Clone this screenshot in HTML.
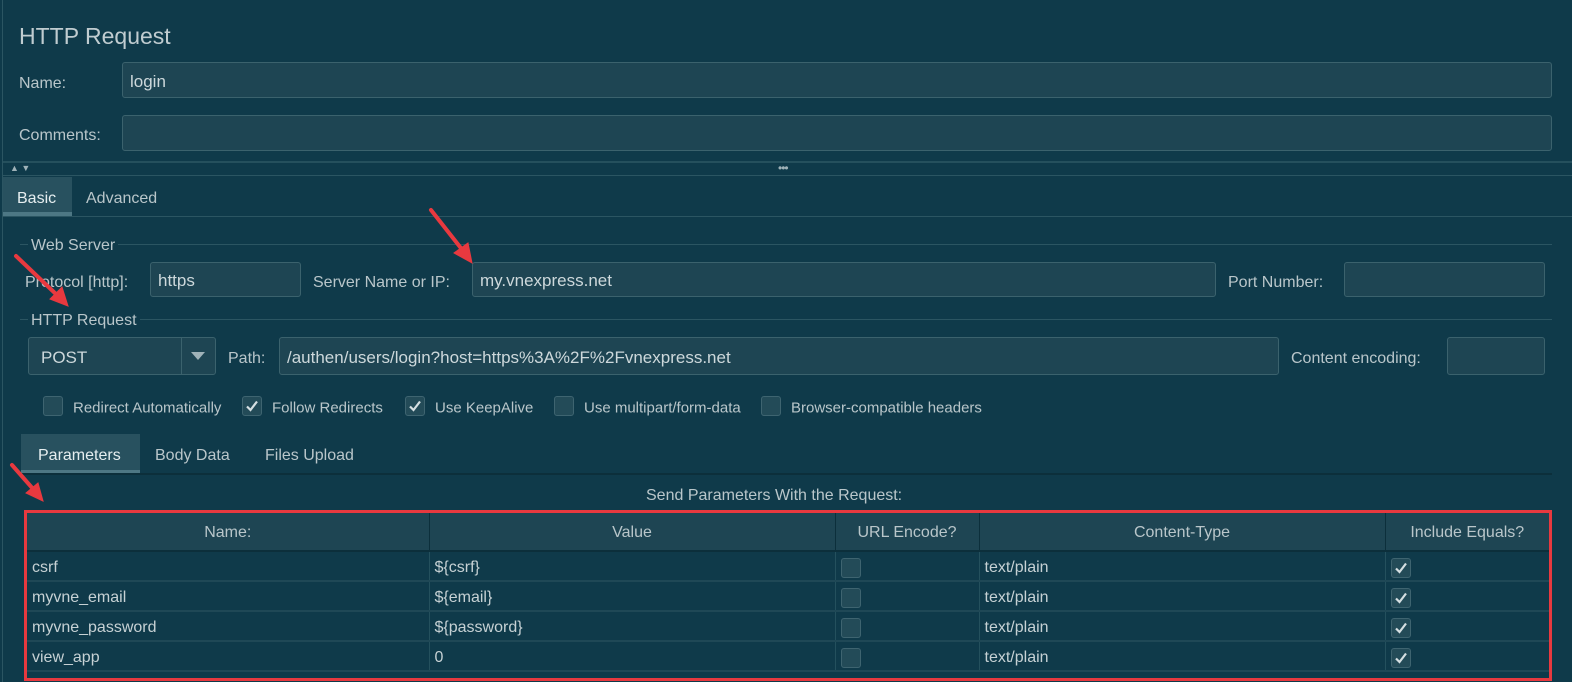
<!DOCTYPE html>
<html><head><meta charset="utf-8"><style>
*{box-sizing:border-box;margin:0;padding:0}
body{width:1572px;height:682px;background:#0f3a4a;font-family:"Liberation Sans",Arial,sans-serif;color:#b9c6ca;position:relative;overflow:hidden;font-size:16px}
.a{position:absolute;white-space:nowrap}
.f{position:absolute;background:#1e4553;border:1px solid #3b626d;border-radius:3px;padding-left:7px;padding-top:3px;display:flex;align-items:center;font-size:17px;color:#cdd8db}
.l{position:absolute;white-space:nowrap;font-size:16px;transform:translateY(calc(-50% + 2px))}
.hr{position:absolute;height:1px;background:#2b5562}
.cb{position:absolute;width:20px;height:20px;border:1px solid #3e6470;background:#234b58;border-radius:3px;display:flex;align-items:center;justify-content:center}
.cb svg{width:14px;height:14px}
.tab{position:absolute;background:#28515f;border-bottom:4px solid #4d7784}
table{position:absolute;left:27px;top:513px;width:1523px;border-collapse:collapse;font-size:16px}
th{background:#1e4553;font-weight:normal;height:38px;padding-top:3px;border-right:1px solid #0c2f3b;border-bottom:2px solid #0c2f3b}
td{height:30px;border-right:1px solid #24505d;border-bottom:2px solid #1f4856;padding-left:5px;padding-top:4px;color:#c6d1d4}
</style></head><body>
<div class="a" style="left:2px;top:0;width:1px;height:682px;background:#2b5562"></div>
<div class="a" style="left:19px;top:23px;font-size:23px;color:#c0ccd0">HTTP Request</div>
<div class="l" style="left:19px;top:82px">Name:</div>
<div class="f" style="left:122px;top:62px;width:1430px;height:36px">login</div>
<div class="l" style="left:19px;top:134px">Comments:</div>
<div class="f" style="left:122px;top:115px;width:1430px;height:36px"></div>
<div class="hr" style="left:3px;top:161px;width:1569px;height:2px;background:#25505d"></div>
<div class="hr" style="left:3px;top:175px;width:1569px"></div>
<div class="a" style="left:10px;top:163px;font-size:9px;color:#9fb2b8">▲ ▼</div>
<div class="a" style="left:778px;top:161px;font-size:12px;color:#9fb2b8;letter-spacing:-1px">•••</div>
<div class="tab" style="left:3px;top:177px;width:69px;height:39px"></div>
<div class="l" style="left:17px;top:197px;color:#e6eef0">Basic</div>
<div class="l" style="left:86px;top:197px">Advanced</div>
<div class="hr" style="left:3px;top:216px;width:1569px"></div>

<div class="hr" style="left:20px;top:244px;width:1532px"></div>
<div class="l" style="left:28px;top:244px;background:#0f3a4a;padding:0 3px">Web Server</div>
<div class="l" style="left:25px;top:281px">Protocol [http]:</div>
<div class="f" style="left:150px;top:262px;width:151px;height:35px">https</div>
<div class="l" style="left:313px;top:281px">Server Name or IP:</div>
<div class="f" style="left:472px;top:262px;width:744px;height:35px">my.vnexpress.net</div>
<div class="l" style="left:1228px;top:281px">Port Number:</div>
<div class="f" style="left:1344px;top:262px;width:201px;height:35px"></div>

<div class="hr" style="left:20px;top:319px;width:1532px"></div>
<div class="l" style="left:28px;top:319px;background:#0f3a4a;padding:0 3px">HTTP Request</div>
<div class="f" style="left:28px;top:337px;width:188px;height:38px;padding-left:12px">POST</div>
<div class="a" style="left:181px;top:338px;width:1px;height:36px;background:#3b626d"></div>
<div class="a" style="left:191px;top:352px;width:0;height:0;border-left:7px solid transparent;border-right:7px solid transparent;border-top:8px solid #9fb2b8"></div>
<div class="l" style="left:228px;top:357px">Path:</div>
<div class="f" style="left:279px;top:337px;width:1000px;height:38px">/authen/users/login?host=https%3A%2F%2Fvnexpress.net</div>
<div class="l" style="left:1291px;top:357px">Content encoding:</div>
<div class="f" style="left:1447px;top:337px;width:98px;height:38px"></div>

<div class="cb" style="left:43px;top:396px"></div><div class="l" style="left:73px;top:406px;font-size:15px">Redirect Automatically</div>
<div class="cb" style="left:242px;top:396px"><svg viewBox="0 0 14 14"><path d="M2 7.5L5.5 11L12 2.5" fill="none" stroke="#d5dfe2" stroke-width="2.2"/></svg></div><div class="l" style="left:272px;top:406px;font-size:15px">Follow Redirects</div>
<div class="cb" style="left:405px;top:396px"><svg viewBox="0 0 14 14"><path d="M2 7.5L5.5 11L12 2.5" fill="none" stroke="#d5dfe2" stroke-width="2.2"/></svg></div><div class="l" style="left:435px;top:406px;font-size:15px">Use KeepAlive</div>
<div class="cb" style="left:554px;top:396px"></div><div class="l" style="left:584px;top:406px;font-size:15px">Use multipart/form-data</div>
<div class="cb" style="left:761px;top:396px"></div><div class="l" style="left:791px;top:406px;font-size:15px">Browser-compatible headers</div>

<div class="tab" style="left:21px;top:434px;width:119px;height:40px"></div>
<div class="l" style="left:38px;top:454px;color:#e6eef0">Parameters</div>
<div class="l" style="left:155px;top:454px">Body Data</div>
<div class="l" style="left:265px;top:454px">Files Upload</div>
<div class="hr" style="left:21px;top:473px;width:1531px;background:#0c2f3b;height:2px"></div>
<div class="l" style="left:646px;top:494px">Send Parameters With the Request:</div>

<table>
<tr><th style="width:402px">Name:</th><th style="width:406px">Value</th><th style="width:144px">URL Encode?</th><th style="width:406px">Content-Type</th><th>Include Equals?</th></tr>
<tr><td>csrf</td><td>${csrf}</td><td><div class="cb" style="position:relative"></div></td><td>text/plain</td><td><div class="cb" style="position:relative"><svg viewBox="0 0 14 14"><path d="M2 7.5L5.5 11L12 2.5" fill="none" stroke="#d5dfe2" stroke-width="2.2"/></svg></div></td></tr>
<tr><td>myvne_email</td><td>${email}</td><td><div class="cb" style="position:relative"></div></td><td>text/plain</td><td><div class="cb" style="position:relative"><svg viewBox="0 0 14 14"><path d="M2 7.5L5.5 11L12 2.5" fill="none" stroke="#d5dfe2" stroke-width="2.2"/></svg></div></td></tr>
<tr><td>myvne_password</td><td>${password}</td><td><div class="cb" style="position:relative"></div></td><td>text/plain</td><td><div class="cb" style="position:relative"><svg viewBox="0 0 14 14"><path d="M2 7.5L5.5 11L12 2.5" fill="none" stroke="#d5dfe2" stroke-width="2.2"/></svg></div></td></tr>
<tr><td>view_app</td><td>0</td><td><div class="cb" style="position:relative"></div></td><td>text/plain</td><td><div class="cb" style="position:relative"><svg viewBox="0 0 14 14"><path d="M2 7.5L5.5 11L12 2.5" fill="none" stroke="#d5dfe2" stroke-width="2.2"/></svg></div></td></tr>
</table>
<div class="a" style="left:24px;top:510px;width:1528px;height:171px;border:3px solid #e8393f"></div>

<svg class="a" style="left:0;top:0" width="1572" height="682">
<g stroke="#e8393f" stroke-width="4" stroke-linecap="round" fill="#e8393f">
<line x1="431" y1="210" x2="464" y2="252"/><polygon points="472,263 454,253 468,243" stroke-width="1"/>
<line x1="16" y1="256" x2="58" y2="296"/><polygon points="68,306 50,299 62,287" stroke-width="1"/>
<line x1="12" y1="465" x2="34" y2="490"/><polygon points="43,501 26,493 38,483" stroke-width="1"/>
</g></svg>
</body></html>
